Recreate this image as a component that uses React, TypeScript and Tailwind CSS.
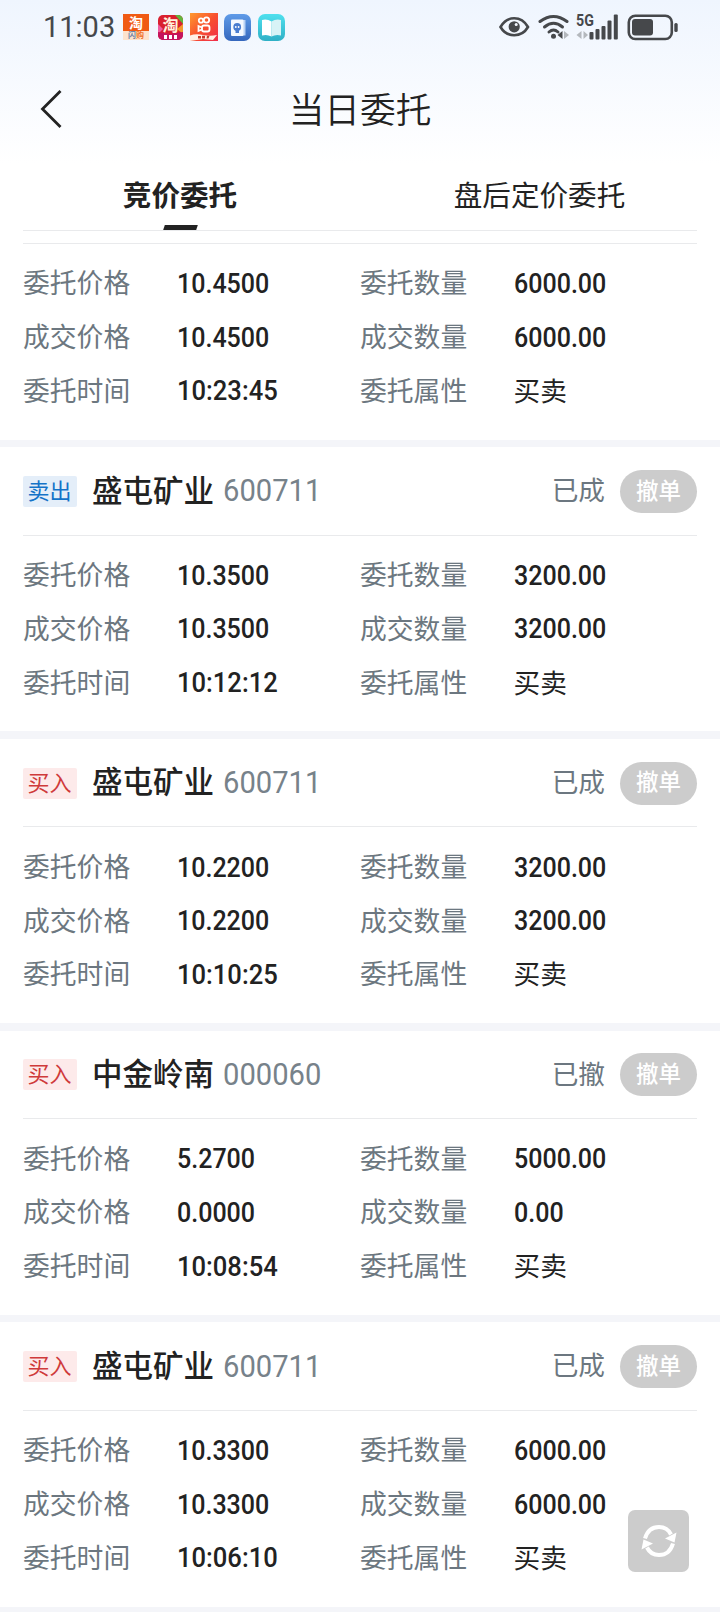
import { cva } from "class-variance-authority";

type Side = "buy" | "sell";

interface Order {
  id: number;
  side?: Side;
  name?: string;
  code?: string;
  status?: string;
  price: string;
  dealPrice: string;
  time: string;
  amount: string;
  dealAmount: string;
}

const orders: Order[] = [
  // header of the first one is scrolled under the tabs
  { id: 1, price: "10.4500", dealPrice: "10.4500", time: "10:23:45", amount: "6000.00", dealAmount: "6000.00" },
  { id: 2, side: "sell", name: "盛屯矿业", code: "600711", status: "已成", price: "10.3500", dealPrice: "10.3500", time: "10:12:12", amount: "3200.00", dealAmount: "3200.00" },
  { id: 3, side: "buy", name: "盛屯矿业", code: "600711", status: "已成", price: "10.2200", dealPrice: "10.2200", time: "10:10:25", amount: "3200.00", dealAmount: "3200.00" },
  { id: 4, side: "buy", name: "中金岭南", code: "000060", status: "已撤", price: "5.2700", dealPrice: "0.0000", time: "10:08:54", amount: "5000.00", dealAmount: "0.00" },
  { id: 5, side: "buy", name: "盛屯矿业", code: "600711", status: "已成", price: "10.3300", dealPrice: "10.3300", time: "10:06:10", amount: "6000.00", dealAmount: "6000.00" },
];

const badge = cva("flex h-[31px] w-[54px] shrink-0 items-center justify-center rounded-[2px] pr-px pb-[5px] text-[22px] leading-none", {
  variants: {
    side: {
      buy: "bg-[#fdeaea] text-[#cf3a3a]",
      sell: "bg-[#e4eef9] text-[#1473c8]",
    },
  },
});

function AppIcons() {
  return (
    <div className="flex items-center">
      {/* Taobao flash */}
      <div className="flex h-[26px] w-[26px] flex-col bg-[#f05a14]">
        <span className="flex h-[17px] items-center justify-center pb-px text-[14px] leading-none font-bold text-white">淘</span>
        <div className="flex h-[9px] w-full items-center justify-center bg-[#fde3cd] pb-px text-[8px] leading-none font-bold">
          <span className="text-[#6d84a8]">闪</span>
          <span className="text-[#f0712c]">购</span>
        </div>
      </div>
      {/* Taobao */}
      <div className="relative ml-[9px] flex h-[25px] w-[25px] justify-center">
        <svg className="absolute inset-0 rounded-[5px]" width="25" height="25" viewBox="0 0 25 25">
          <rect width="25" height="25" fill="#d9202f" />
          <path d="M17 0h8v9z" fill="#62b53c" />
          <path d="M0 9l5 5-5 5z" fill="#ef5da0" />
          <path d="M25 9l-6 5 6 5z" fill="#f39a2d" />
          <path d="M0 17l12 2 13-2v8H0z" fill="#c5145c" />
          <path d="M6 20h3v4H6zM11 20h3v4h-3zM16 20h3v4h-3z" fill="#fff" />
        </svg>
        <span className="relative mt-px text-[16px] leading-none font-bold text-[#fff3dc]">淘</span>
      </div>
      <svg className="ml-[7px]" width="28" height="28" viewBox="0 0 28 28">
        <defs>
          <linearGradient id="ks" x1="0" y1="0" x2="1" y2="1">
            <stop offset="0" stopColor="#ff9a2e" />
            <stop offset="0.5" stopColor="#f8502f" />
            <stop offset="1" stopColor="#f02d4c" />
          </linearGradient>
        </defs>
        <rect width="28" height="28" fill="url(#ks)" />
        <g fill="none" stroke="#fff" strokeWidth="1.8">
          <circle cx="11" cy="7.500" r="2.200" />
          <circle cx="16.500" cy="7" r="2.700" />
          <rect x="12" y="12.500" width="7.500" height="6" rx="2" />
          <path d="M12 14.500l-3.500-1.500v5l3.500-1.500" />
        </g>
        <path d="M0 22.500q6-2 13-0.500t14 0l-4 5-10-1-13 2z" fill="#fff0e6" />
        <path d="M8 23h3v2.500H8zM12 22.800h3v2.800h-3zM17 22.800h2.500l-1 2.800h-2z" fill="#c93a2b" />
      </svg>
      <svg className="ml-[6px]" width="27" height="27" viewBox="0 0 27 27">
        <defs>
          <linearGradient id="book" x1="0" y1="0" x2="0" y2="1">
            <stop offset="0" stopColor="#5f9be8" />
            <stop offset="1" stopColor="#3567bd" />
          </linearGradient>
        </defs>
        <rect width="27" height="27" rx="7" fill="url(#book)" />
        <path d="M19 6h2.500v15.500H19z" fill="#b9d2f5" />
        <rect x="7" y="5.500" width="12.500" height="16.500" rx="1" fill="#f5f9ff" />
        <circle cx="13.200" cy="13" r="3.900" fill="#4a7dd0" />
        <path d="M11.500 16h3.500v3h-3.500z" fill="#4a7dd0" />
        <circle cx="11.800" cy="13" r="0.900" fill="#fff" />
        <circle cx="14.600" cy="13" r="0.900" fill="#fff" />
      </svg>
      <svg className="ml-[7px]" width="27" height="27" viewBox="0 0 27 27">
        <defs>
          <linearGradient id="reader" x1="0" y1="0" x2="0" y2="1">
            <stop offset="0" stopColor="#4fe0ee" />
            <stop offset="1" stopColor="#2fb0c6" />
          </linearGradient>
        </defs>
        <rect width="27" height="27" rx="7" fill="url(#reader)" />
        <path d="M4 6q5-1.500 9.500 1.500v15Q9 20 4 21.500z" fill="#fff" />
        <path d="M23 6q-5-1.500-9.500 1.500v15Q18 20 23 21.500z" fill="#d8f3f6" />
      </svg>
    </div>
  );
}

function StatusBar() {
  return (
    <div className="flex h-[54px] items-center pr-[41px] pl-[43px] text-[#46484b]">
      <span className="w-[80px] pt-px font-[Roboto] text-[29px] leading-none">11:03</span>
      <AppIcons />
      <div className="ml-auto flex items-center">
        <svg width="31" height="22" viewBox="0 0 31 22" fill="none">
          <path d="M1.500 11C5 5 10 2.300 15.200 2.300S25.500 5 29 11c-3.500 6-8.600 8.200-13.800 8.200S5 17 1.500 11z" stroke="currentColor" strokeWidth="2.600" />
          <circle cx="15.200" cy="10.800" r="5.600" fill="currentColor" />
          <circle cx="17.200" cy="8.600" r="1.500" fill="#f3f7fe" />
        </svg>
        <svg className="ml-[8px]" width="32" height="26" viewBox="0 0 32 26" fill="none">
          <g stroke="currentColor" strokeWidth="3" strokeLinecap="round">
            <path d="M2 7.500Q15.500-2.500 29 7.500" />
            <path d="M6.500 13Q15.500 5.500 24.500 13" />
            <path d="M11 18Q15.500 14 20 18" />
          </g>
          <circle cx="15.500" cy="22.300" r="2.500" fill="currentColor" />
          <path d="M24.500 17v8l-5-4z" fill="currentColor" />
          <path d="M26 17v8l5-4z" fill="#b4b8bd" />
        </svg>
        <div className="relative ml-[6px] h-[26px] w-[43px]">
          <span className="absolute top-0 left-0 origin-left scale-x-[0.86] font-[Roboto] text-[16.500px] leading-[14px] font-bold">5G</span>
          <svg className="absolute inset-0" width="43" height="26" viewBox="0 0 43 26">
            <path d="M5.500 17v8l-5-4zM7.500 17v8l4.500-4z" fill="#b4b8bd" />
            <g fill="currentColor">
              <rect x="13.500" y="18" width="4" height="7.500" rx="1" />
              <rect x="19.500" y="15" width="4" height="10.500" rx="1" />
              <rect x="25.500" y="12" width="4" height="13.500" rx="1" />
              <rect x="31.500" y="6.500" width="4" height="19" rx="1" />
              <rect x="37.800" y="0.500" width="4" height="25" rx="1" />
            </g>
          </svg>
        </div>
        <svg className="ml-[8px]" width="52" height="27" viewBox="0 0 52 27" fill="none">
          <rect x="1.800" y="1.800" width="43" height="23.200" rx="6.500" stroke="currentColor" strokeWidth="2.600" />
          <rect x="5" y="5" width="21" height="16.500" rx="3" fill="currentColor" />
          <rect x="47.300" y="9" width="3.400" height="9" rx="1.500" fill="currentColor" />
        </svg>
      </div>
    </div>
  );
}

function NavBar() {
  return (
    <div className="grid h-[110px] grid-cols-[100px_1fr_100px] items-center text-[#222]">
      <svg className="ml-[39px]" width="26" height="42" viewBox="0 0 26 42" fill="none">
        <path d="M21.500 3L3.500 21l18 18" stroke="currentColor" strokeWidth="2.800" />
      </svg>
      <h1 className="pb-[3px] text-center text-[35.700px] leading-none font-[350]">当日委托</h1>
    </div>
  );
}

function Tabs() {
  return (
    <div className="mx-[23px] flex h-[67px] shrink-0 border-b border-[#e9eaec] text-[28.600px] text-[#222]">
      <button className="flex w-[314px] flex-col items-center pt-[10px] font-bold">
        <span className="leading-[40px]">竞价委托</span>
        <span className="mt-auto h-[5px] w-[33px] -skew-x-[18deg] bg-[#222]" />
      </button>
      <button className="flex flex-1 flex-col items-center pt-[10px] pl-[45px]">
        <span className="leading-[40px]">盘后定价委托</span>
      </button>
    </div>
  );
}

function Field({ label, value, kind = "number" }: { label: string; value: string; kind?: "number" | "time" | "text" }) {
  return (
    <div className="flex h-[53.700px] items-center leading-none text-[#222]">
      <span className="w-[153.500px] pb-[2px] text-[26.800px] text-[#6c7780]">{label}</span>
      {kind === "text" && <span className="pb-[2px] text-[26.700px]">{value}</span>}
      {kind === "number" && (
        <span className="origin-left scale-x-[0.91] font-[Roboto] text-[27.500px] font-medium">{value}</span>
      )}
      {kind === "time" && (
        <span className="origin-left scale-x-[0.93] font-[Roboto] text-[27.500px] font-medium">{value}</span>
      )}
    </div>
  );
}

function OrderCard({ order }: { order: Order }) {
  return (
    <section>
      {order.side && (
        <>
          <div className="h-[7.500px] bg-[#f4f5f9]" />
          <div className="mx-[23px] flex h-[87.500px] items-center pt-px leading-none">
            <span className={badge({ side: order.side })}>{order.side === "buy" ? "买入" : "卖出"}</span>
            <span className="ml-[15px] pb-[5px] text-[30.500px] font-medium text-[#222]">{order.name}</span>
            <span className="ml-[9px] origin-left scale-x-[0.94] pb-px font-[Roboto] text-[31px] font-normal text-[#77828a]">
              {order.code}
            </span>
            <span className="ml-auto pb-[4px] text-[26.700px] text-[#6c7780]">{order.status}</span>
            <button className="ml-[15px] flex h-[43px] w-[77px] items-center justify-center rounded-full bg-[#ccc] pb-[5px] text-[22.500px] font-medium text-white">
              撤单
            </button>
          </div>
        </>
      )}
      <div className="mx-[23px] grid grid-cols-2 border-t border-[#e9eaec] pt-[13px] pb-[21.650px]">
        <Field label="委托价格" value={order.price} />
        <Field label="委托数量" value={order.amount} />
        <Field label="成交价格" value={order.dealPrice} />
        <Field label="成交数量" value={order.dealAmount} />
        <Field label="委托时间" value={order.time} kind="time" />
        <Field label="委托属性" value="买卖" kind="text" />
      </div>
    </section>
  );
}

export default function App() {
  return (
    <div className="relative flex h-[1612px] w-[720px] flex-col overflow-hidden bg-white font-['Noto_Sans_CJK_SC',sans-serif]">
      <header className="shrink-0 bg-linear-to-b from-[#eff5fe] to-white">
        <StatusBar />
        <NavBar />
      </header>
      <Tabs />
      <main className="flex-1 pt-[12px]">
        {orders.map((order) => (
          <OrderCard key={order.id} order={order} />
        ))}
        <div className="h-[7.500px] bg-[#f4f5f9]" />
      </main>

      {/* Floating refresh */}
      <button className="absolute right-[31px] bottom-[40px] flex h-[62px] w-[61px] items-center justify-center rounded-[7px] bg-[#ccc]">
        <svg width="36" height="34" viewBox="0 0 36 34" fill="none">
          <g stroke="#fff" strokeWidth="4">
            <path d="M4 14.500C6.500 6 12 3 18 3c5.500 0 9.800 3 12 7.500" />
            <path d="M32 19.500C29.500 28 24 31 18 31c-5.500 0-9.800-3-12-7.500" />
          </g>
          <path d="M35.500 8.500L33.500 18.500 24 14.500z" fill="#fff" />
          <path d="M0.500 25.500L2.500 15.500 12 19.500z" fill="#fff" />
        </svg>
      </button>
    </div>
  );
}
